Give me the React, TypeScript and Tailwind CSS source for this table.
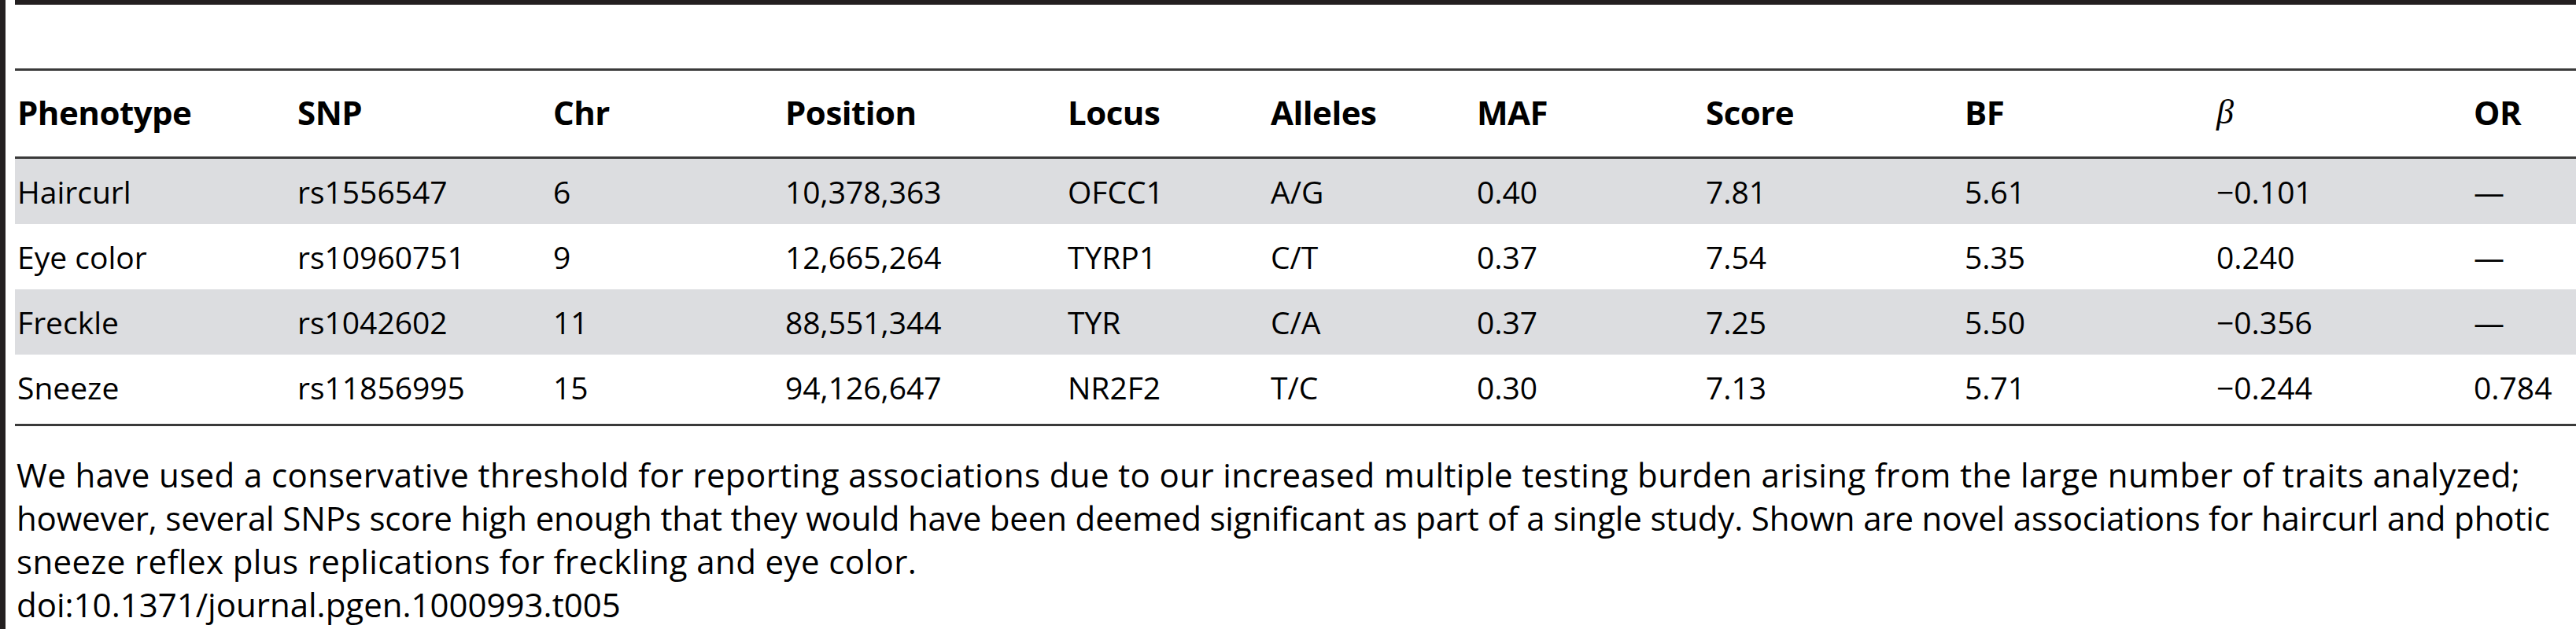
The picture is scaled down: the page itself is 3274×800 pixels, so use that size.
import React from "react";

const rows = [
  ["Haircurl", "rs1556547", "6", "10,378,363", "OFCC1", "A/G", "0.40", "7.81", "5.61", "\u22120.101", "\u2014"],
  ["Eye color", "rs10960751", "9", "12,665,264", "TYRP1", "C/T", "0.37", "7.54", "5.35", "0.240", "\u2014"],
  ["Freckle", "rs1042602", "11", "88,551,344", "TYR", "C/A", "0.37", "7.25", "5.50", "\u22120.356", "\u2014"],
  ["Sneeze", "rs11856995", "15", "94,126,647", "NR2F2", "T/C", "0.30", "7.13", "5.71", "\u22120.244", "0.784"],
];

const headers = ["Phenotype", "SNP", "Chr", "Position", "Locus", "Alleles", "MAF", "Score", "BF", "\u03b2", "OR"];

const grid =
  "grid grid-cols-[356px_325px_295px_359px_258px_262px_291px_329px_320px_327px_1fr]";

const footLines: [string, string][] = [
  [
    "We have used a conservative threshold for reporting associations due to our increased multiple testing burden arising from the large number of traits analyzed;",
    "tracking-[0.4px]",
  ],
  [
    "however, several SNPs score high enough that they would have been deemed significant as part of a single study. Shown are novel associations for haircurl and photic",
    "tracking-[-0.15px]",
  ],
  ["sneeze reflex plus replications for freckling and eye color.", "tracking-[0.4px]"],
  ["doi:10.1371/journal.pgen.1000993.t005", "tracking-[0px]"],
];

export default function App() {
  return (
    <div
      className="flex w-[3274px] h-[800px] overflow-hidden bg-white text-black"
      style={{ fontFamily: '"Open Sans", "Noto Sans", sans-serif' }}
    >
      <div className="w-[7px] shrink-0 bg-[#231f20]" />
      <div className="flex-1 min-w-0 pl-[12px] flex flex-col">
        <div className="h-[6px] bg-[#231f20]" />
        <div className="h-[81px]" />
        <div className="border-t-[3px] border-b-[3px] border-[#3a3a3a]">
          <div className={`${grid} h-[109px] items-center pb-[4px]`}>
            {headers.map((h, i) => (
              <div
                key={h}
                className={
                  i === 9
                    ? "pl-[3px] text-[44px] italic"
                    : "pl-[3px] text-[42px] font-bold tracking-[-0.5px]"
                }
                style={i === 9 ? { fontFamily: '"Liberation Serif", serif' } : undefined}
              >
                {h}
              </div>
            ))}
          </div>
        </div>
        <div className="border-b-[3px] border-[#3a3a3a] pb-[5px]">
          {rows.map((r, ri) => (
            <div
              key={ri}
              className={`${grid} h-[83px] items-center ${ri % 2 === 0 ? "bg-[#dcdde0]" : "bg-white"}`}
            >
              {r.map((c, ci) => (
                <div key={ci} className="pl-[3px] text-[39px] leading-none whitespace-nowrap">
                  {c}
                </div>
              ))}
            </div>
          ))}
        </div>
        <div className="pt-[34px] pl-[2px] text-[42px] leading-[55px]">
          {footLines.map(([l, t], i) => (
            <div key={i} className={`whitespace-nowrap ${t}`}>
              {l}
            </div>
          ))}
        </div>
      </div>
    </div>
  );
}
